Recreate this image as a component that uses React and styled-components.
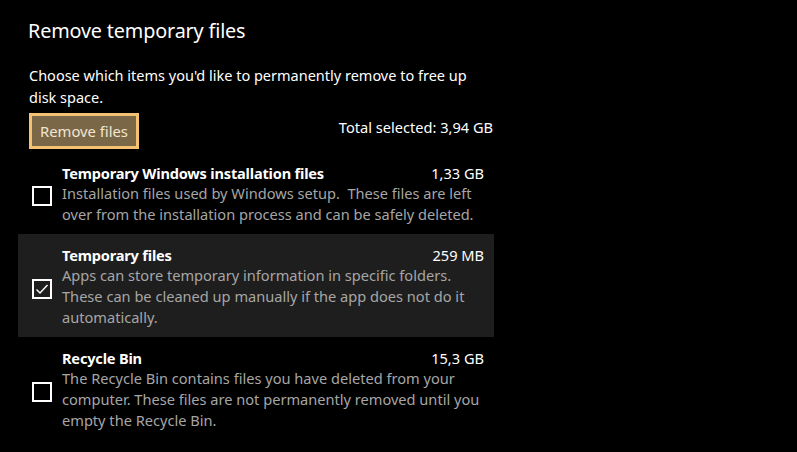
import React from "react";
import styled, { createGlobalStyle } from "styled-components";

const Global = createGlobalStyle`
  html, body { margin: 0; padding: 0; background: #000; }
  body { font-family: "Noto Sans", "Open Sans", sans-serif; color: #fff; }
`;

const Page = styled.div`
  width: 797px;
  height: 452px;
  background: #000;
  padding: 14px 0 0 18px;
  box-sizing: border-box;
  overflow: hidden;
`;

const Panel = styled.div`
  width: 476px;
  display: flex;
  flex-direction: column;
`;

const Header = styled.div`
  padding: 0 1px 0 10px;
  display: flex;
  flex-direction: column;
`;

const Title = styled.h1`
  margin: 0;
  font-size: 19.8px;
  font-weight: 400;
  line-height: 34px;
  letter-spacing: -0.15px;
`;

const Desc = styled.p`
  margin: 16px 0 0 1px;
  font-size: 14.5px;
  line-height: 22px;
  color: #fff;
`;

const ActionBar = styled.div`
  display: flex;
  align-items: center;
  justify-content: space-between;
  margin-top: 5px;
`;

const Button = styled.button`
  font-family: inherit;
  font-size: 14.8px;
  color: #f3e6d0;
  background: #7a6748;
  border: 3px solid #f3c272;
  height: 36px;
  padding: 0 8px;
  margin-left: 1px;
  line-height: 28px;
`;

const Total = styled.span`
  font-size: 14.6px;
  margin-top: -8px;
`;

const List = styled.div`
  display: flex;
  flex-direction: column;
  margin-top: 3px;
`;

const Row = styled.div`
  display: flex;
  align-items: center;
  padding: 11px 10px 9px 14px;
  background: ${(p) => (p.$active ? "#1e1e1e" : "transparent")};
`;

const Box = styled.span`
  flex: none;
  width: 20px;
  height: 20px;
  box-sizing: border-box;
  border: 2px solid #fff;
  display: flex;
  align-items: center;
  justify-content: center;
  margin: 4px 10px 0 0;
`;

const Body = styled.div`
  flex: 1;
  display: flex;
  flex-direction: column;
`;

const RowHead = styled.div`
  display: flex;
  justify-content: space-between;
  align-items: baseline;
`;

const ItemTitle = styled.span`
  font-weight: 700;
  font-size: 14.6px;
  line-height: 20px;
  letter-spacing: -0.2px;
`;

const Size = styled.span`
  font-size: 14.6px;
  line-height: 20px;
`;

const ItemDesc = styled.p`
  margin: 0;
  font-size: 14.6px;
  line-height: 21px;
  color: #a6a6a6;
  padding-right: 4px;
  white-space: pre-wrap;
`;

const Check = () => (
  <svg width="14" height="12" viewBox="0 0 14 12">
    <path d="M1.5 6.5 L5 10 L12.5 2" fill="none" stroke="#fff" strokeWidth="1.4" />
  </svg>
);

const items = [
  {
    title: "Temporary Windows installation files",
    size: "1,33 GB",
    desc: "Installation files used by Windows setup.  These files are left over from the installation process and can be safely deleted.",
    checked: false,
  },
  {
    title: "Temporary files",
    size: "259 MB",
    desc: "Apps can store temporary information in specific folders. These can be cleaned up manually if the app does not do it automatically.",
    checked: true,
  },
  {
    title: "Recycle Bin",
    size: "15,3 GB",
    desc: "The Recycle Bin contains files you have deleted from your computer. These files are not permanently removed until you empty the Recycle Bin.",
    checked: false,
  },
];

export default function App() {
  return (
    <>
      <Global />
      <Page>
        <Panel>
          <Header>
            <Title>Remove temporary files</Title>
            <Desc>
              Choose which items you'd like to permanently remove to free up disk space.
            </Desc>
            <ActionBar>
              <Button>Remove files</Button>
              <Total>Total selected: 3,94 GB</Total>
            </ActionBar>
          </Header>
          <List>
            {items.map((it) => (
              <Row key={it.title} $active={it.checked}>
                <Box>{it.checked && <Check />}</Box>
                <Body>
                  <RowHead>
                    <ItemTitle>{it.title}</ItemTitle>
                    <Size>{it.size}</Size>
                  </RowHead>
                  <ItemDesc>{it.desc}</ItemDesc>
                </Body>
              </Row>
            ))}
          </List>
        </Panel>
      </Page>
    </>
  );
}
